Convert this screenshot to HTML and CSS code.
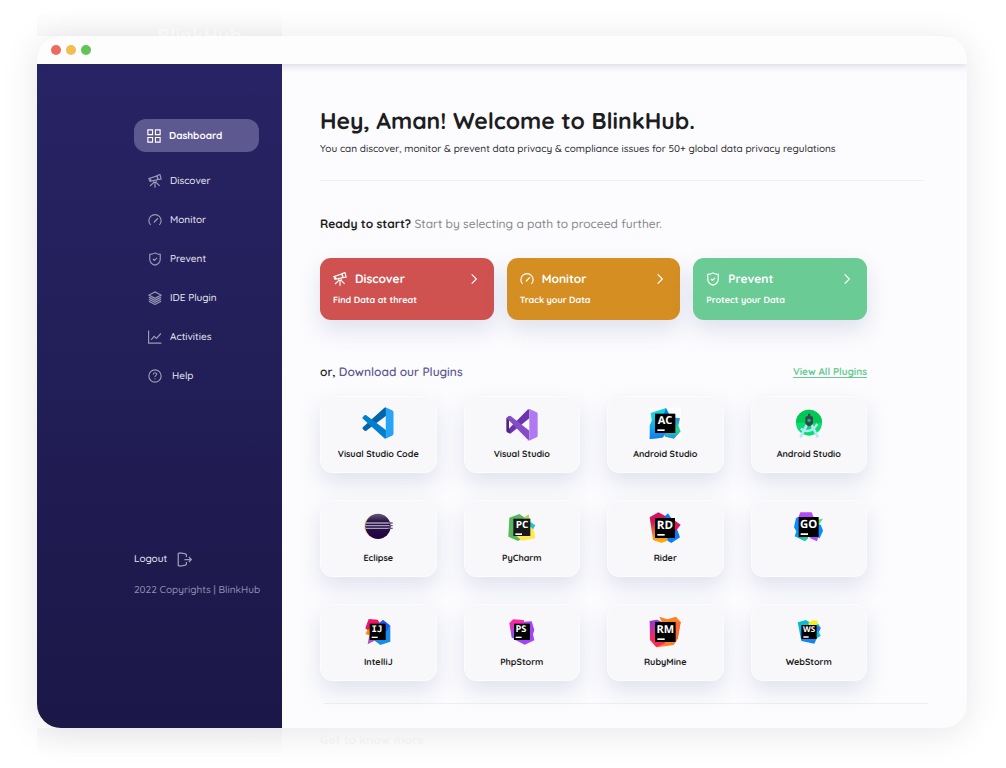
FILE: index.html
```html
<!DOCTYPE html>
<html lang="en">
<head>
<meta charset="utf-8">
<meta name="viewport" content="width=device-width, initial-scale=1">
<title>BlinkHub</title>
<link rel="stylesheet" href="styles.css">
</head>
<body>
<svg class="defs" aria-hidden="true">
  <defs>
    <symbol id="i-scope" viewBox="0 0 24 24"><path d="M1.500 8 15 3.500l2 6L3.500 12.500zM15.500 2.500 20.500 1l2 7.500-5 1zM4.500 8.500v3.500M10 11.500v3h4v-3M10.500 14 3.500 20.500M13.500 14l6.500 6.500M12 15v8.500"/></symbol>
    <symbol id="i-gauge" viewBox="0 0 24 24"><path d="M4.500 20.500a10.500 10.500 0 1 1 15 0M11 15l6-6M10 16.500l3-3"/></symbol>
    <symbol id="i-shield" viewBox="0 0 24 24"><path d="M12 1.500c3 2 6 2.500 9 2.500v8c0 5.500-4 9-9 10.500C7 21 3 17.500 3 12V4c3 0 6-.5 9-2.500zM8.500 12l2.500 2.500 4.500-4.500"/></symbol>
    <symbol id="i-layers" viewBox="0 0 24 24"><path d="m12 1.500 10.500 5.500L12 12.500 1.500 7zM1.500 10.500 12 16l10.500-5.500M1.500 14 12 19.500 22.500 14M1.500 17.500 12 23l10.500-5.500"/></symbol>
    <symbol id="i-chart" viewBox="0 0 24 24"><path d="M1 1v21.500h22M5.500 17l5-6 4 3.500L22 6"/></symbol>
    <symbol id="i-help" viewBox="0 0 24 24"><circle cx="12" cy="12" r="10.500"/><path d="M9 9.500c0-4 6-4 6-.5 0 2-3 2-3 4.500M12 16v1.500"/></symbol>
    <symbol id="i-next" viewBox="0 0 24 24"><path d="m8 4 8 8-8 8"/></symbol>
  </defs>
</svg>

<div class="page">
  <div class="ghost ghost-top" aria-hidden="true">
    <div class="ghost-side"><span class="ghost-brand">BlinkHub</span></div>
  </div>

  <div class="window">
    <header class="titlebar"><i class="dot red"></i><i class="dot amber"></i><i class="dot green"></i></header>
    <div class="body">
      <aside class="sidebar">
        <nav class="nav">
          <a class="nav-link active" href="#"><svg viewBox="0 0 24 24"><path d="M1.500 1.500h8v8h-8zM14.500 1.500h8v8h-8zM1.500 14.500h8v8h-8zM14.500 14.500h8v8h-8z"/></svg>Dashboard</a>
          <a class="nav-link" href="#"><svg><use href="#i-scope"/></svg>Discover</a>
          <a class="nav-link" href="#"><svg><use href="#i-gauge"/></svg>Monitor</a>
          <a class="nav-link" href="#"><svg><use href="#i-shield"/></svg>Prevent</a>
          <a class="nav-link" href="#"><svg><use href="#i-layers"/></svg>IDE Plugin</a>
          <a class="nav-link" href="#"><svg><use href="#i-chart"/></svg>Activities</a>
          <a class="nav-link help" href="#"><svg><use href="#i-help"/></svg>Help</a>
        </nav>
        <footer class="side-foot">
          <a class="logout" href="#">Logout<svg viewBox="0 0 24 24"><path d="M15 8V4.500L13.500 3 5 1.500 2 2.500v19l3 1L13.500 21l1.500-1.500V16M12 12h11M19 8l4 4-4 4"/></svg></a>
          <p class="copyright">2022 Copyrights | BlinkHub</p>
        </footer>
      </aside>

      <main class="main">
        <h1 class="title">Hey, Aman! Welcome to BlinkHub.</h1>
        <p class="subtitle">You can discover, monitor &amp; prevent data privacy &amp; compliance issues for 50+ global data privacy regulations</p>
        <hr class="rule">
        <div class="content">
          <p class="ready"><strong>Ready to start?</strong> Start by selecting a path to proceed further.</p>
          <div class="paths">
            <a class="path discover" href="#"><span class="path-head"><svg><use href="#i-scope"/></svg>Discover<svg class="next"><use href="#i-next"/></svg></span><span class="path-sub">Find Data at threat</span></a>
            <a class="path monitor" href="#"><span class="path-head"><svg><use href="#i-gauge"/></svg>Monitor<svg class="next"><use href="#i-next"/></svg></span><span class="path-sub">Track your Data</span></a>
            <a class="path prevent" href="#"><span class="path-head"><svg><use href="#i-shield"/></svg>Prevent<svg class="next"><use href="#i-next"/></svg></span><span class="path-sub">Protect your Data</span></a>
          </div>
          <div class="plugins-head">
            <h2>or, <span>Download our Plugins</span></h2>
            <a href="#">View All Plugins</a>
          </div>
          <div class="plugins">
            <a class="plugin" href="#">
              <svg viewBox="-8 -8 116 116"><path fill="#0065a9" d="M96.500 10.800 75.900.9c-2.400-1.100-5.300-.7-7.100 1.200L1.300 63.600c-1.800 1.700-1.800 4.500 0 6.100l5.500 5c1.500 1.400 3.700 1.500 5.300.3l81.300-61.600c2.700-2.100 6.600-.2 6.600 3.300 0-2.600-1.400-4.800-3.500-5.900z"/><path fill="#007fd0" d="M96.500 89.200 75.900 99.100c-2.400 1.200-5.300.7-7.100-1.200L1.300 36.400c-1.800-1.600-1.800-4.500 0-6.100l5.500-5c1.500-1.400 3.700-1.500 5.300-.3l81.300 61.600c2.700 2.100 6.600.2 6.600-3.300 0 2.700-1.400 4.900-3.500 5.900z"/><path fill="#25a5f3" d="M75.900 99.100c-2.400 1.200-5.300.7-7.100-1.200 2.300 2.300 6.200.7 6.200-2.600V4.700c0-3.300-3.900-4.900-6.200-2.600 1.800-1.900 4.700-2.300 7.100-1.200l20.600 9.900c2.100 1 3.500 3.200 3.500 5.600v67.200c0 2.400-1.400 4.600-3.500 5.600z"/></svg>
              <span>Visual Studio Code</span></a>
            <a class="plugin" href="#">
              <svg viewBox="581 45 108 108"><path fill="#52218a" d="M600 77 590 82 588 85V123L590 127 600 131V115L596 117V91L600 94Z"/><path fill="#6c33af" d="M600 131 657 85V57L651 60 597 115Z"/><path fill="#854cc7" d="M600 77 657 122V151L651 148 597 92 590 86 590 82Z"/><path fill="#b179f1" d="M650 59q4-4 9-1l20 9q3 2 3 5v65q0 3-3 5l-20 9q-5 2-9-2 7 3 7-4V63q0-6-7-4z"/></svg>
              <span>Visual Studio</span></a>
            <a class="plugin" href="#">
              <svg viewBox="156 45 108 108"><defs><linearGradient id="ac1" x1="0" y1="0" x2="0" y2="1"><stop offset="0" stop-color="#0bdde0"/><stop offset="1" stop-color="#1379f0"/></linearGradient><linearGradient id="ac2" x1="0" y1="0" x2="0" y2="1"><stop offset="0" stop-color="#2382f0"/><stop offset=".6" stop-color="#28d68a"/><stop offset="1" stop-color="#1e8df5"/></linearGradient></defs><path fill="#fff" d="M163 53h94v94h-94z"/><path fill="url(#ac2)" d="M214 80 255 85 250 107 257 124 237 146 210 140Z"/><path fill="#12d3e4" d="M167 69 213 54 226 76 190 145 164 147 170 90Z"/><path fill="url(#ac1)" d="M164 105 182 73 215 128 203 143 164 147Z"/><path fill="#176fe3" d="M213 54 220 72H207Z"/><path d="M180 71h61v58h-61z"/><path fill="#fff" d="M187 118h22v5h-22z"/><text class="mono" x="210" y="103" font-size="33" text-anchor="middle">AC</text></svg>
              <span>Android Studio</span></a>
            <a class="plugin" href="#">
              <svg viewBox="586 45 108 108"><circle cx="640" cy="98" r="39" fill="#08dc73"/><path fill="#00c853" d="M601 98a39 39 0 0 1 78 0z"/><g fill="none" stroke="#b4e8f5" stroke-width="8"><path d="M634 104 614 142M647 104l20 38"/><path d="M615 116q28 19 50-14" stroke-width="7"/></g><path fill="#37474f" d="M637 71h7v6l8 4v20l-8 8h-7l-8-8V81l8-4z"/><circle cx="640" cy="91" r="5" fill="#08c95d"/></svg>
              <span>Android Studio</span></a>
            <a class="plugin" href="#">
              <svg viewBox="151 42 108 108"><defs><linearGradient id="ec" x1="0" y1="0" x2="0" y2="1"><stop offset="0" stop-color="#655c78"/><stop offset=".3" stop-color="#2a1645"/><stop offset="1" stop-color="#220043"/></linearGradient></defs><circle cx="199" cy="94" r="36" fill="#e7dfb5"/><circle cx="205" cy="94" r="38" fill="url(#ec)"/><path stroke="#a99fba" stroke-width="4" d="M168 84h73M167 92h75M168 100h73"/><path stroke="#695596" stroke-width="4" d="M236 84h13M238 92h11M236 100h13"/></svg>
              <span>Eclipse</span></a>
            <a class="plugin" href="#">
              <svg viewBox="581 42 108 108"><path fill="#58b85f" d="M597 68 627 57 644 68 638 128 623 138 594 125Z"/><path fill="#9edb5b" d="M639 69 655 58 660 85 630 90Z"/><path fill="#20c1d7" d="M655 77 675 91 667 105 655 105Z"/><path fill="#ffe94e" d="M659 94 670 104 675 130 635 137 617 122Z"/><path fill="#191919" d="M609 71h51v52h-51z"/><path fill="#fff" d="M615 115h20v5h-20z"/><text class="mono" x="635" y="99" font-size="30" text-anchor="middle">PC</text></svg>
              <span>PyCharm</span></a>
            <a class="plugin" href="#">
              <svg viewBox="156 42 108 108"><defs><linearGradient id="rd" x1="0" y1="0" x2="0" y2="1"><stop offset=".3" stop-color="#d3145c"/><stop offset=".75" stop-color="#f58529"/><stop offset="1" stop-color="#fdb60d"/></linearGradient></defs><path fill="#087cfa" d="M219 55 230 71 245 100 255 127 229 144 203 128 206 67Z"/><path fill="#d91961" d="M240 77 257 89 240 112Z"/><path fill="url(#rd)" d="M164 67 190 52 212 64 218 137 199 144 174 135Z"/><path d="M180 69h60v60h-60z"/><path fill="#fff" d="M187 117h22v5h-22z"/><text class="mono" x="210" y="102" font-size="35" text-anchor="middle">RD</text></svg>
              <span>Rider</span></a>
            <a class="plugin" href="#" aria-label="GoLand">
              <svg viewBox="586 42 108 108"><defs><linearGradient id="go" x1="0" y1="0" x2="1" y2="1"><stop offset=".4" stop-color="#078efc"/><stop offset=".8" stop-color="#22c99b"/></linearGradient></defs><path fill="#078efc" d="M650 75 676 91 682 107 672 130 650 120Z"/><path fill="url(#go)" d="M601 69 615 63 638 129 628 139 597 124 602 109 595 97Z"/><path fill="#b74af7" d="M614 52H648L655 70 605 76ZM640 128 670 118 664 139Z"/><path fill="#3bea62" d="M661 75 682 71 668 90Z"/><path d="M609 66h60v60h-60z"/><path fill="#fff" d="M615 115h22v5h-22z"/><text class="mono" x="639" y="98" font-size="34" text-anchor="middle">GO</text></svg>
              <span></span></a>
            <a class="plugin" href="#">
              <svg viewBox="151 54 108 108"><path fill="#1a8be8" d="M208 84 220 75 242 92V140L212 150 195 137Z"/><path fill="#2259f0" d="M210 84 220 75 240 91 230 110Z"/><path fill="#ee1664" d="M177 72 204 74 214 90 180 110 167 100Z"/><path fill="#fb8c00" d="M174 105 185 100V122L167 117Z"/><path fill="#a955bd" d="M179 120 203 133 174 148Z"/><path d="M180 86h48v49h-48z"/><path fill="#fff" d="M186 125h18v4h-18z"/><text class="mono serif" x="202" y="111" font-size="27" text-anchor="middle">IJ</text></svg>
              <span>IntelliJ</span></a>
            <a class="plugin" href="#">
              <svg viewBox="581 54 108 108"><defs><linearGradient id="ps" x1="0" y1="0" x2="0" y2="1"><stop offset=".2" stop-color="#f72ba7"/><stop offset=".8" stop-color="#8553f5"/></linearGradient></defs><path fill="#a044f5" d="M640 80 664 79 672 105 668 118 672 136 643 149 615 135Z"/><path fill="url(#ps)" d="M597 85 608 73 640 75 644 95 619 134 604 128Z"/><path d="M611 86h48v49h-48z"/><path fill="#fff" d="M616 125h18v4h-18z"/><text class="mono" x="632" y="111" font-size="28" text-anchor="middle">PS</text></svg>
              <span>PhpStorm</span></a>
            <a class="plugin" href="#">
              <svg viewBox="156 54 108 108"><defs><linearGradient id="rm" x1="0" y1="0" x2="0" y2="1"><stop offset="0" stop-color="#9039d9"/><stop offset=".7" stop-color="#fe2857"/></linearGradient></defs><path fill="#fd8224" d="M193 65 217 73 243 65 257 81 248 132 236 150 187 157 205 90Z"/><path fill="#fc6a35" d="M241 80 257 81 248 132 241 130Z"/><path fill="url(#rm)" d="M164 78 186 74 202 82 210 145 184 157 165 135Z"/><path d="M180 81h62v60h-62z"/><path fill="#fff" d="M187 130h22v5h-22z"/><text class="mono" x="211" y="114" font-size="33" text-anchor="middle">RM</text></svg>
              <span>RubyMine</span></a>
            <a class="plugin" href="#">
              <svg viewBox="586 54 108 108"><defs><linearGradient id="ws" x1="0" y1="0" x2="0" y2="1"><stop offset=".3" stop-color="#08bfd0"/><stop offset="1" stop-color="#127bf3"/></linearGradient></defs><path fill="url(#ws)" d="M606 82 631 75 655 90 668 120 656 146 617 138Z"/><path fill="#09bfdc" d="M655 82 668 87 675 98 670 110 675 123 660 131Z"/><path fill="#2f6ff0" d="M667 92 675 99 669 111 660 103Z"/><path fill="#f7ee16" d="M638 84 652 76 666 77 665 90 640 93Z"/><path d="M617 90h46v42h-46z"/><path fill="#fff" d="M623 124h16v4h-16z"/><text class="mono" x="640" y="111" font-size="24" text-anchor="middle">WS</text></svg>
              <span>WebStorm</span></a>
          </div>
        </div>
        <hr class="rule rule-end">
      </main>
    </div>
  </div>

  <div class="ghost ghost-bottom" aria-hidden="true">
    <div class="ghost-side"></div><span class="ghost-more">Get to know more</span>
  </div>
</div>
</body>
</html>
```
FILE: styles.css
```css
* { box-sizing: border-box; }

body {
  margin: 0;
  background: #fff;
  color: #1d1d22;
  font-family: Quicksand, Lato, sans-serif;
  font-size: 10px;
  font-weight: 500;
  line-height: 16px;
  text-rendering: geometricPrecision;
}

a { color: inherit; text-decoration: none; }
h1, h2, p, hr { margin: 0; }

.defs { position: absolute; width: 0; height: 0; }

.page {
  min-height: 100vh;
  padding: 0 39px 0 37px;
  display: grid;
  grid-template-rows: 36px 1fr 40px;
}

/* Faded edges of the page behind the window */
.ghost { display: flex; }
.ghost-side { flex: 0 0 245px; }
.ghost-top .ghost-side {
  padding: 26px 0 0 120px;
  background: linear-gradient(rgba(40, 36, 98, 0) 30%, rgba(40, 36, 98, 0.03));
}
.ghost-bottom .ghost-side { background: linear-gradient(rgba(40, 36, 98, 0.03), rgba(40, 36, 98, 0) 75%); }
.ghost-brand { color: #fff; font-size: 20px; line-height: 20px; font-weight: 700; }
.ghost-more { padding: 4px 0 0 38px; color: #f1f1f1; font-size: 12px; font-weight: 700; }

.window {
  display: flex;
  flex-direction: column;
  border-radius: 24px;
  background: #fcfcfe;
  box-shadow: 0 4px 36px rgba(0, 0, 0, 0.1);
  overflow: hidden;
}

.titlebar {
  position: relative;
  display: flex;
  align-items: center;
  gap: 5px;
  height: 28px;
  padding-left: 14px;
  background: #fdfdfd;
  box-shadow: 0 1px 8px rgba(40, 40, 80, 0.2);
}
.dot { width: 10px; height: 10px; border-radius: 50%; }
.red { background: #ed6a5e; }
.amber { background: #f4bd4f; }
.green { background: #61c454; }

.body { display: flex; flex: 1; }

.sidebar {
  display: flex;
  flex-direction: column;
  flex: 0 0 245px;
  padding: 55px 0 130px 97px;
  background: linear-gradient(#282465, #1b1747);
  color: #e9e8f2;
}

.nav { display: flex; flex-direction: column; gap: 15px; margin-right: 23px; }
.nav-link {
  display: flex;
  align-items: center;
  gap: 8px;
  height: 24px;
  padding-left: 14px;
}
.nav svg, .path svg, .logout svg {
  width: 14px;
  height: 14px;
  fill: none;
  stroke: currentColor;
  stroke-width: 2;
}
.nav-link svg { color: #9c99b8; }
.nav-link.active {
  height: 33px;
  margin-bottom: 2px;
  padding-left: 13px;
  border-radius: 12px;
  background: #5d5990;
  color: #fff;
  font-weight: 700;
}
.nav-link.active svg { color: #fff; }
.nav-link.help { gap: 10px; }

.side-foot { margin-top: auto; }
.logout { display: flex; align-items: center; gap: 10px; }
.logout svg { width: 15px; height: 15px; color: #9c99b8; }
.copyright { margin-top: 15px; color: #918eaf; white-space: nowrap; }

.main { flex: 1; min-width: 0; padding: 41px 43px 24px 38px; }
.title { font-size: 23px; line-height: 32px; font-weight: 700; }
.subtitle { margin-top: 4px; color: #2a2a30; }
.rule { height: 1px; border: 0; background: #efeff2; }
.subtitle + .rule { margin-top: 23px; }
.rule-end { margin: 22px -4px 0 4px; }

.content { padding-right: 57px; }
.ready { margin-top: 35px; color: #858589; font-size: 12px; }
.ready strong { color: #1d1d22; font-weight: 700; }

.paths {
  display: grid;
  grid-template-columns: repeat(3, 1fr);
  gap: 13px;
  margin-top: 26px;
}
.path {
  display: flex;
  flex-direction: column;
  gap: 6px;
  padding: 13px 13px 11px;
  border-radius: 11px;
  color: #fff;
  font-size: 9px;
  font-weight: 700;
  box-shadow: 0 10px 22px rgba(70, 80, 150, 0.16);
}
.path-head { display: flex; align-items: center; gap: 8px; font-size: 12px; }
.path-head .next { margin-left: auto; }
.path.discover { background: #cf5251; }
.path.monitor { background: #d58e22; }
.path.prevent { background: #6acb95; }

.plugins-head {
  display: flex;
  justify-content: space-between;
  align-items: center;
  margin-top: 44px;
}
.plugins-head h2 { font-size: 12px; font-weight: 600; }
.plugins-head span { color: #5d5990; }
.plugins-head a { color: #6acb95; font-weight: 700; text-decoration: underline; text-underline-offset: 2px; }

.plugins {
  display: grid;
  grid-template-columns: repeat(4, 1fr);
  gap: 27px;
  margin-top: 16px;
}
.plugin {
  display: flex;
  flex-direction: column;
  align-items: center;
  gap: 6px;
  height: 77px;
  padding-top: 8px;
  border: 1px solid #fcfcfd;
  border-radius: 12px;
  background: #f8f8fa;
  box-shadow: 0 10px 22px rgba(70, 80, 150, 0.15);
  font-size: 9px;
  font-weight: 700;
}
.plugin svg { width: 36px; height: 36px; }

.mono { fill: #fff; font-family: "Open Sans", sans-serif; font-weight: 700; }
.mono.serif { font-family: "DejaVu Sans Mono", monospace; }
```
